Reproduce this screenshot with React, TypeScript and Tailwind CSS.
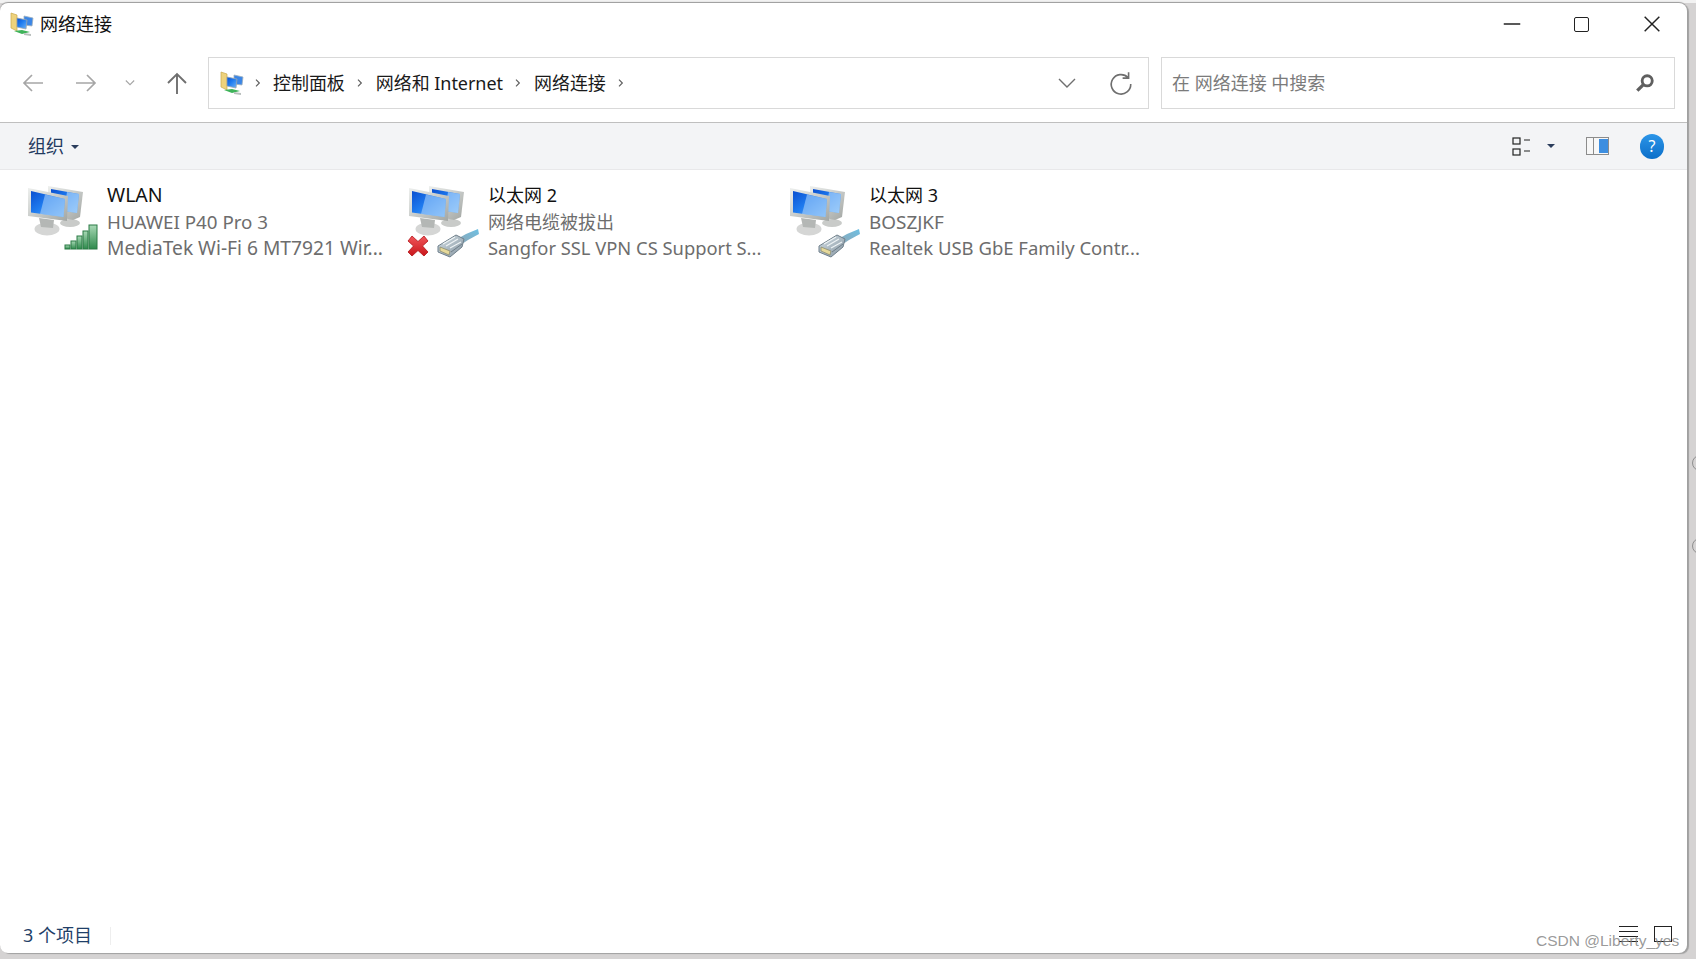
import type { ReactNode } from 'react';

const uiFont = { fontFamily: '"Noto Sans", "Noto Sans CJK SC", sans-serif' };

const Defs = () => (
  <defs>
    <linearGradient id="screen" x1="0" y1="0" x2="1" y2="1">
      <stop offset="0" stopColor="#0a4fd0" />
      <stop offset="0.45" stopColor="#1f7cf0" />
      <stop offset="1" stopColor="#6fb4f7" />
    </linearGradient>
    <linearGradient id="frame" x1="0" y1="0" x2="1" y2="1">
      <stop offset="0" stopColor="#eef0ee" />
      <stop offset="1" stopColor="#a2a6a3" />
    </linearGradient>
    <linearGradient id="bar" x1="0" y1="0" x2="0" y2="1">
      <stop offset="0" stopColor="#a9d9b6" />
      <stop offset="1" stopColor="#2e8a4c" />
    </linearGradient>
    <linearGradient id="plug" x1="0" y1="0" x2="1" y2="1">
      <stop offset="0" stopColor="#d5e0e6" />
      <stop offset="1" stopColor="#8494a0" />
    </linearGradient>
    <linearGradient id="cross" x1="0" y1="0" x2="0" y2="1">
      <stop offset="0" stopColor="#f0565a" />
      <stop offset="1" stopColor="#c9161b" />
    </linearGradient>
    <linearGradient id="cable" x1="0" y1="1" x2="1" y2="0">
      <stop offset="0" stopColor="#8fa6b4" />
      <stop offset="1" stopColor="#6cc0e4" />
    </linearGradient>
  </defs>
);

// two monitors, drawn in the 90x90 crop coordinates of the icon
const Monitors = () => (
  <g>
    <ellipse cx="55" cy="49" rx="10" ry="4" fill="#c9cbc9" />
    <path d="M33 12 L68 18 L65 43 L58 46 L33 41 Z" fill="url(#frame)" />
    <path d="M36 15 L64 20 L62 39 L36 35 Z" fill="url(#screen)" />
    <path d="M52 18 L64 20 L62 39 L49 37 Z" fill="#b6d8fb" opacity="0.65" />
    <ellipse cx="32" cy="55" rx="12.5" ry="6.5" fill="#d5d6d5" />
    <path d="M24 44 L39 46 L38 54 L26 53 Z" fill="#b4b7b5" />
    <path d="M13 14 L53 22 L52 47 L13 42 Z" fill="url(#frame)" />
    <path d="M16 17 L50 25 L48.5 43 L16 38.5 Z" fill="url(#screen)" />
    <path d="M30 20.5 L50 25 L48.5 43 L25 40 Z" fill="#a9d0fa" opacity="0.6" />
  </g>
);

const WifiBars = () => (
  <g>
    {[
      [50, 71, 4],
      [56, 67, 4],
      [62, 62, 4],
      [68, 57, 4],
      [74, 51, 7],
    ].map(([x, y, w]) => (
      <rect key={x} x={x} y={y} width={w + 1} height={75 - y} fill="url(#bar)" stroke="#2b7a45" strokeWidth="1" />
    ))}
  </g>
);

const Plug = () => (
  <g>
    <path d="M63 64 L70 60 L82 55 L83 60 L72 66 L66 70 Z" fill="url(#cable)" />
    <path d="M42 72 L60 61 L68 65 L66 73 L54 83 L42 78 Z" fill="url(#plug)" stroke="#6f7f8a" strokeWidth="1" />
    <path d="M44 73 L54 77 L53 81 L44 77 Z" fill="#e6d99a" stroke="#8b8b70" strokeWidth="0.8" />
    <path d="M47 70 L59 63 M50 72 L62 65 M54 74 L65 68" stroke="#eef3f5" strokeWidth="1.2" />
    <path d="M55 78 L66 70" stroke="#6f7f8a" strokeWidth="1" />
  </g>
);

const RedCross = () => (
  <path
    d="M12 67 L16 62 L22 67.5 L28 62 L32 67 L26.5 72 L32 78 L28 82 L22 76.5 L16 82 L12 78 L17.5 72 Z"
    fill="url(#cross)"
    stroke="#b31519"
    strokeWidth="0.8"
  />
);

const NetIcon = ({ badge, cross }: { badge: 'wifi' | 'plug'; cross?: boolean }) => (
  <svg width="90" height="90" viewBox="0 0 90 90" className="shrink-0">
    <Defs />
    <Monitors />
    {badge === 'wifi' ? <WifiBars /> : <Plug />}
    {cross && <RedCross />}
  </svg>
);

const FolderIcon = () => (
  <svg width="24" height="24" viewBox="0 0 24 24" className="shrink-0">
    <Defs />
    <path d="M1 1 L7 3 L7 19 L1 16 Z" fill="#eed27c" stroke="#c9a94f" strokeWidth="0.7" />
    <path d="M14 4 L23 6 L22 14 L14 13 Z" fill="#3b86e6" stroke="#9fb0bd" strokeWidth="0.8" />
    <path d="M7 6 L17 8 L16 17 L7 15 Z" fill="url(#screen)" stroke="#9aa5ad" strokeWidth="0.8" />
    <path d="M4 19 L12 18 L20 20 L12 22 Z" fill="#3fb35a" />
    <path d="M14 21 L21 22 L21 24 L14 23 Z" fill="#b9bfbd" />
  </svg>
);

const Line = ({ d, color, w = 1.6, size = 24 }: { d: string; color: string; w?: number; size?: number }) => (
  <svg width={size} height={size} viewBox="0 0 24 24" fill="none" stroke={color} strokeWidth={w} className="shrink-0">
    <path d={d} />
  </svg>
);

const Crumb = ({ children }: { children?: ReactNode }) => (
  <>
    <span className="flex w-[31px] justify-center">
      <Line d="M9 7 L14 12 L9 17" color="#606060" w={1.8} size={16} />
    </span>
    {children && <span className="text-[18px] tracking-[-0.05px] text-[#1a1a1a]">{children}</span>}
  </>
);

const Caret = () => <span className="block h-0 w-0 border-x-[4px] border-t-[4px] border-x-transparent border-t-[#2b3d5c]" />;

type Conn = {
  name: string;
  nameClass: string;
  status: string;
  statusClass: string;
  device: string;
  deviceClass: string;
  badge: 'wifi' | 'plug';
  cross?: boolean;
};

const conns: Conn[] = [
  {
    name: 'WLAN',
    nameClass: 'text-[19.5px]',
    status: 'HUAWEI P40 Pro 3',
    statusClass: 'text-[18.75px]',
    device: 'MediaTek Wi-Fi 6 MT7921 Wir...',
    deviceClass: 'text-[19.2px]',
    badge: 'wifi',
  },
  {
    name: '以太网 2',
    nameClass: 'text-[18px]',
    status: '网络电缆被拔出',
    statusClass: 'text-[18px]',
    device: 'Sangfor SSL VPN CS Support S...',
    deviceClass: 'text-[18.35px]',
    badge: 'plug',
    cross: true,
  },
  {
    name: '以太网 3',
    nameClass: 'text-[18px]',
    status: 'BOSZJKF',
    statusClass: 'text-[18.9px]',
    device: 'Realtek USB GbE Family Contr...',
    deviceClass: 'text-[18.5px]',
    badge: 'plug',
  },
];

export default function App() {
  return (
    <div className="relative h-[959px] w-[1696px] overflow-hidden bg-[#d5d3d3] pt-[3px]" style={uiFont}>
      <span className="absolute left-0 top-0 h-[3px] w-full bg-[#f2f2f2]" />
      <span className="absolute left-[1692px] top-[455px] h-[16px] w-[16px] rounded-full border border-[#8f8f8f]" />
      <span className="absolute left-[1692px] top-[538px] h-[16px] w-[16px] rounded-full border border-[#8f8f8f]" />
      <div className="relative flex h-[950px] w-[1687px] flex-col overflow-hidden rounded-[8px] bg-white shadow-[2px_1px_1px_#a0a0a0,0_-1px_1px_#9a9a9a]">
        {/* title bar */}
        <div className="flex h-[42px] shrink-0 items-center pl-[10px]">
          <FolderIcon />
          <span className="ml-[6px] text-[18px] text-[#111]">网络连接</span>
          <div className="ml-auto flex items-center">
            <span className="flex w-[70px] justify-center">
              <Line d="M3 12 H21" color="#222" w={1.4} size={22} />
            </span>
            <span className="flex w-[70px] items-center justify-center pr-[2px]">
              <span className="h-[15px] w-[15px] rounded-[2px] border-[1.5px] border-[#222]" />
            </span>
            <span className="flex w-[70px] justify-center">
              <Line d="M4 4 L20 20 M20 4 L4 20" color="#222" w={1.6} size={22} />
            </span>
          </div>
        </div>

        {/* nav row */}
        <div className="flex h-[78px] shrink-0 items-center border-b border-[#bfbfbf] pb-[13px] pt-[12px]">
          <div className="flex w-[208px] items-center pl-[21px]">
            <Line d="M22 12 H3 M11 4 L3 12 L11 20" color="#a6a6a6" w={1.7} />
            <span className="ml-[29px]">
              <Line d="M2 12 H21 M13 4 L21 12 L13 20" color="#a6a6a6" w={1.7} />
            </span>
            <span className="ml-[22px]">
              <Line d="M7 9 L12 14 L17 9" color="#a6a6a6" w={1.3} size={20} />
            </span>
            <span className="ml-[25px]">
              <Line d="M12 23 V3 M3 12 L12 3 L21 12" color="#6f6f6f" w={1.9} />
            </span>
          </div>
          <div className="flex h-[52px] w-[941px] items-center border border-[#d9d9d9] pl-[11px]">
            <span className="-mr-[2px]">
              <FolderIcon />
            </span>
            <Crumb>控制面板</Crumb>
            <Crumb>网络和 Internet</Crumb>
            <Crumb>网络连接</Crumb>
            <Crumb />
            <span className="ml-auto flex items-center gap-[29px] pr-[14px]">
              <Line d="M4 8 L12 16 L20 8" color="#6f6f6f" w={1.4} size={24} />
              <Line d="M18.5 7 A9 9 0 1 0 21 13 M19 2 V7.5 H13.5" color="#6f6f6f" w={1.5} size={26} />
            </span>
          </div>
          <div className="ml-[12px] flex h-[52px] w-[514px] items-center justify-between border border-[#d9d9d9] pl-[10px] pr-[18px]">
            <span className="pt-px text-[18px] text-[#7b7b7b]">在 网络连接 中搜索</span>
            <svg width="22" height="22" viewBox="0 0 20 20" fill="none" stroke="#5f5f5f">
              <circle cx="12" cy="8" r="4.6" strokeWidth="2.6" />
              <path d="M8.5 11.5 L3 17" strokeWidth="3" />
            </svg>
          </div>
        </div>

        {/* toolbar */}
        <div className="flex h-[47px] shrink-0 items-center border-b border-[#e8e8ea] bg-[#f3f4f6] pl-[28px]">
          <span className="text-[18px] text-[#1f3a5f]">组织</span>
          <span className="ml-[7px] pt-px">
            <Caret />
          </span>
          <div className="ml-auto flex items-center">
            <svg width="20" height="22" viewBox="0 0 20 22" fill="none" stroke="#222" strokeWidth="1.2">
              <rect x="1" y="3" width="7" height="6" />
              <rect x="1" y="14" width="7" height="6" />
              <path d="M12 5 H18 M12 16 H18" />
            </svg>
            <span className="ml-[15px]">
              <Caret />
            </span>
            <svg width="23" height="18" viewBox="0 0 23 18" className="ml-[31px]">
              <rect x="0.5" y="0.5" width="22" height="17" fill="#f7f7f7" stroke="#8c8c8c" />
              <rect x="7" y="1" width="1" height="16" fill="#8c8c8c" />
              <rect x="13" y="2" width="9" height="14" fill="#3d8ee0" />
            </svg>
            <span className="ml-[31px] mr-[23px] flex h-[25px] w-[24px] items-center justify-center rounded-full bg-gradient-to-b from-[#2b95e8] to-[#0a6fc9] text-[16px] leading-none text-white">
              ?
            </span>
          </div>
        </div>

        {/* connections */}
        <div className="flex flex-1 pl-[15px] pt-[4px]">
          {conns.map((c) => (
            <div key={c.name} className="flex h-[90px] w-[381px] shrink-0">
              <NetIcon badge={c.badge} cross={c.cross} />
              <div className="ml-[2px] pt-[8px] leading-[26px] whitespace-nowrap text-[#6d6d6d]">
                <div className={`${c.nameClass} h-[27px] text-[#111]`}>{c.name}</div>
                <div className={c.statusClass}>{c.status}</div>
                <div className={c.deviceClass}>{c.device}</div>
              </div>
            </div>
          ))}
        </div>

        {/* status bar */}
        <div className="flex h-[33px] shrink-0 items-center pb-[2px] pl-[23px]">
          <span className="text-[18px] text-[#1f3f68]">3 个项目</span>
          <span className="ml-[18px] h-[18px] w-px bg-[#eeeeee]" />
          <div className="ml-auto flex items-center gap-[16px] pb-[4px] pr-[15px]">
            <span className="flex w-[19px] flex-col gap-[4px]">
              <span className="h-px bg-[#222]" />
              <span className="h-px bg-[#222]" />
              <span className="h-px bg-[#222]" />
              <span className="h-px bg-[#222]" />
            </span>
            <span className="h-[16px] w-[18px] border border-[#222]" />
          </div>
        </div>
      </div>

      <span
        className="absolute left-[1536px] top-[929px] text-[15.5px] text-[#808080]/80"
        style={{ fontFamily: '"Liberation Sans", sans-serif' }}
      >
        CSDN @Liberty_yes
      </span>
    </div>
  );
}
